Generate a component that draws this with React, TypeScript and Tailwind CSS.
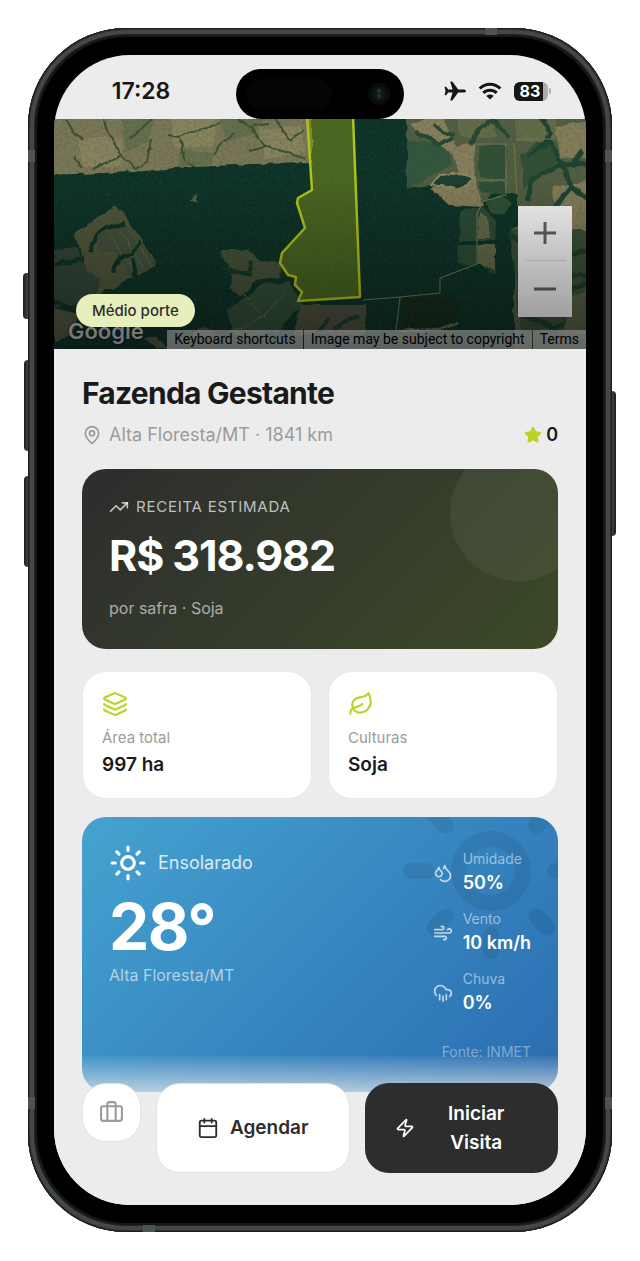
import {
  Briefcase,
  Calendar,
  CloudRain,
  Droplets,
  Layers,
  Leaf,
  MapPin,
  Star,
  Sun,
  TrendingUp,
  Wind,
  Zap,
} from "lucide-react";

const stats = [
  { label: "Área total", value: "997 ha", icon: Layers },
  { label: "Culturas", value: "Soja", icon: Leaf },
];

const weather = [
  { label: "Umidade", value: "50%", icon: Droplets },
  { label: "Vento", value: "10 km/h", icon: Wind },
  { label: "Chuva", value: "0%", icon: CloudRain },
];

const StatusBar = () => (
  <div className="grid h-16 grid-cols-[1fr_168px_1fr] items-center">
    <div className="pt-2 pr-2 text-center text-[23px] leading-7 font-semibold text-[#161616]">17:28</div>
    <div className="mt-[14px] flex h-[50px] items-center justify-between rounded-full bg-black pr-[14px] pl-[10px]">
      <div className="h-[30px] w-[86px] rounded-full bg-[#050505]" />
      <svg viewBox="0 0 22 22" className="size-[22px]">
        <circle cx="11" cy="11" r="11" fill="#0c0c0d" />
        <circle cx="11" cy="11" r="7" fill="#121516" />
        <circle cx="11" cy="8" r="2" fill="#2b3033" />
        <circle cx="11" cy="13" r="2.4" fill="#0e3a2c" />
      </svg>
    </div>
    <div className="flex items-center justify-center gap-3 pt-2 pl-1 text-[#161616]">
      <svg viewBox="0 0 22 20" className="h-5 w-[22px]" fill="currentColor">
        <path d="M22 10c0-1-1.300-1.600-2.800-1.600h-5L8.700.9C8.500.6 8.200.4 7.800.4h-1c-.4 0-.6.3-.5.7l2.300 7.300H4.200L2.300 6c-.2-.2-.4-.3-.7-.3H1c-.3 0-.5.2-.4.5L1.500 10l-.9 3.800c-.1.300.1.500.4.500h.6c.3 0 .5-.1.700-.3l1.900-2.400h4.400l-2.300 7.300c-.1.400.1.700.5.700h1c.4 0 .7-.2.900-.5l5.500-7.500h5C20.700 11.600 22 11 22 10Z" />
      </svg>
      <svg viewBox="0 0 24 18" className="h-[18px] w-6" fill="none" stroke="currentColor" strokeWidth="3">
        <path d="M1.700 6.500C7.500.7 16.500.7 22.300 6.500" />
        <path d="M5.300 10.900c3.700-3.700 9.700-3.700 13.400 0" />
        <path d="M12 17.600 8.300 14c2-2 5.400-2 7.400 0Z" fill="currentColor" stroke="none" />
      </svg>
      <div className="flex items-center gap-px">
        <div className="flex h-[19px] w-[34px] items-center overflow-hidden rounded-md bg-[#acacae]">
          <span className="h-full w-[29px] bg-[#161616] pl-[6px] text-[16px] leading-[19px] font-bold text-white">83</span>
        </div>
        <span className="h-[6px] w-[2px] rounded-r-full bg-[#acacae]" />
      </div>
    </div>
  </div>
);

const SatelliteMap = () => (
  <svg viewBox="0 0 532 230" preserveAspectRatio="xMidYMid slice" className="absolute inset-0 size-full">
    <defs>
      <filter id="grain" x="0" y="0" width="100%" height="100%">
        <feTurbulence type="fractalNoise" baseFrequency="0.35" numOctaves="3" seed="4" />
        <feColorMatrix values="0 0 0 0 0.05  0 0 0 0 0.08  0 0 0 0 0.06  1.600 0 0 0 -0.65" />
      </filter>
      <filter id="rough" x="-5%" y="-5%" width="110%" height="110%">
        <feTurbulence type="fractalNoise" baseFrequency="0.07" numOctaves="3" seed="9" />
        <feDisplacementMap in="SourceGraphic" scale="6" xChannelSelector="R" yChannelSelector="G" />
      </filter>
    </defs>
    <rect width="532" height="230" fill="#0d3529" />
    <g filter="url(#rough)">
      {/* cleared land, north west */}
      <path d="M-8-8H258V44L200 45 120 49 80 53-8 56Z" fill="#807d5a" />
      <path d="M24 18h44v30H28ZM118-4h42v32h-40ZM205 12l40-6 8 28-42 6Z" fill="#908a64" />
      <path d="M66-4h36l-8 26-22 12ZM168-4h46l-14 18-30 10ZM128 30l34 4-6 12-32 2Z" fill="#6b7451" />
      <g fill="none" stroke="#3e5535" strokeWidth="2">
        <path d="M50 0c2 12 4 16 10 22l8 14-28 14M68 36l14 14 12-8 4-22M76 20l22-20M12 0l8 14 10 6M22 36l6 14" />
        <path d="M168 0c-10 14-30 8-42 18l-12-2M126 20l6 22 8 6M184 0l12 8 18-2M180 14l-14 12-6 10M196 8l14 18 42 14M196 32l20-6M220 0l16 22 14-12" />
      </g>
      {/* fields, west */}
      <path d="M21 113 36 103 61 87 71 96 103 144 73 161 59 171 39 176 30 144Z" fill="#575b3e" />
      <path d="M70 102 86 122 103 146 78 160 62 132 44 134 42 112Z" fill="#4a5740" />
      <path d="M74 110l22 34M66 112l24 38M56 116l24 38M84 122l14 26" stroke="#656a4c" strokeWidth="1" />
      <path d="M0 130l22-2 10 22 14 10-6 24-40 6Z" fill="#34493a" />
      <path d="M0 190l26 6-10 20-16 6ZM90 218l12 0 14 12h-12Z" fill="#565d42" />
      <g fill="none" stroke="#0f3528" strokeWidth="4">
        <path d="M38 134c0-16 6-22 18-26l16-4M60 154c2-12 8-18 18-18l8-14M78 140l4 24M-4 182l28 10 14-6M0 146l30-6M48 172h22" />
      </g>
      <path d="M136 82l6-9 2 10ZM148 78l6-3" fill="#52664a" />
      {/* fields, south */}
      <path d="M165 131 195 131 206 141 228 145 226 158 202 162 186 178 176 170 178 156Z" fill="#4c583c" />
      <path d="M211 165 236 162 242 174 248 188 232 202 224 216 180 216 174 190Z" fill="#34523b" />
      <path d="M188 172l20 26 22-22M208 198l-30 14" stroke="#62704c" strokeWidth="1" fill="none" />
      <path d="M196 142l-2 14M170 150l28 6" stroke="#123a2b" strokeWidth="4" />
      <path d="M246 186H311V216H240ZM138 214l14-6 16 10H138Z" fill="#53573f" />
      <path d="M280 210l24-14M262 216l14-18" stroke="#1b4130" strokeWidth="4" />
      {/* farmland, north east */}
      <path d="M353-8H540V240H460V108H464V76L440 72 426 88 393 84 376 66 353 69Z" fill="#566345" />
      <path d="M353 20 396 28 398 46 353 70Z" fill="#365a3f" />
      <path d="M388-6 402 28 420 24 422 64 430 88 394 86 376 70 406 60 400 36 356 6Z" fill="#8f8560" />
      <path d="M424 26h28v36l-26-4ZM466 36l30-22 10 26-36 30ZM426 64h26l-2 12-24-4Z" fill="#305239" />
      <path d="M500 8l34-6v36l-26 2ZM498 68l36-6v50l-26 8Z" fill="#8b845c" />
      <path d="M462-4h40v26h-40ZM404-4h38v22h-38Z" fill="#68714b" />
      <path d="M362 12l22 14 14-8M380 8l20 8M416 24l10-14 14-10 14 18" fill="none" stroke="#284b35" strokeWidth="4" />
      <path d="M378 66l8-10 22-2 12 6-14 10-18-4Z" fill="#1d4231" stroke="#9a9168" strokeWidth="2" />
      <path d="M486-4l10 18-6 12-16 10M494 18l14 28 26-2M508 46l10 22 16 12M474 82l4-22 24-12 6-4M530 32l-12 14M500 90l18-22" fill="none" stroke="#1f4733" strokeWidth="5" />
      <path d="M456 110H532V232H468Z" fill="#3d5339" />
      <path d="M456 116l20 10 18 14 40-8M462 156h70M470 196l30 14 36-16M516 170l20-6" fill="none" stroke="#1b3f2d" strokeWidth="5" />
      <path d="M518 178l14-4v40l-24 6Z" fill="#5d6748" />
      {/* small lots */}
      <path d="M406 92l22-4 14 14-2 54-16-12-20 2Z" fill="#2d4f38" />
      <path d="M423 126h18v26l-18-8ZM424 94l10 4 2 22h-12Z" fill="#6a714e" />
      <path d="M432 82l14-6 12 8-8 12-14-2Z" fill="#335439" />
      <path d="M404 124h40" stroke="#0f3528" strokeWidth="4" />
      <path d="M348 180 400 177 408 192 402 208 370 214 348 214Z" fill="#122e1f" />
      <path d="M346 212l40-2 18-6" stroke="#62704f" strokeWidth="3" fill="none" />
    </g>
    <g fill="none" stroke="#7d805a" strokeWidth="1">
      <path d="M420 25h32v51l-22 6-7 12v51l-37 14v15l-40 4-37 3M346 178l-4 34M460 24l3 52M462 20h36M416 61h36" />
    </g>
    <rect width="532" height="230" filter="url(#grain)" opacity="0.4" />
    <path
      d="M253-3 258 71 244 79 243 84 251 109 228 134 226 144 234 156 242 158 241 166 248 173 244 182 306 178 299-3Z"
      fill="#94a51c"
      fillOpacity="0.47"
      stroke="#b9cc1c"
      strokeWidth="2.500"
      strokeLinejoin="round"
    />
  </svg>
);

const MapHeader = () => (
  <div className="relative h-[230px] overflow-hidden">
    <SatelliteMap />
    <span className="absolute bottom-0 left-[14px] text-[22px] leading-[36px] font-semibold text-[#c9cbc9] [text-shadow:0_0_2px_#000]">
      Google
    </span>
    <div className="absolute top-[87px] right-[14px] flex w-[54px] flex-col items-center bg-white">
      <button type="button" aria-label="Zoom in" className="flex h-[54px] w-full items-center justify-center">
        <svg viewBox="0 0 24 24" className="size-6 fill-[#666]">
          <path d="M10.500 1h3v9.500H23v3h-9.500V23h-3v-9.500H1v-3h9.500Z" />
        </svg>
      </button>
      <span className="h-px w-[41px] bg-[#ddd]" />
      <button type="button" aria-label="Zoom out" className="flex h-[56px] w-full items-center justify-center">
        <svg viewBox="0 0 24 24" className="size-6 fill-[#666]">
          <path d="M1 10.500h22v3H1Z" />
        </svg>
      </button>
    </div>
    <div className="absolute right-0 bottom-0 flex gap-px font-[Roboto,sans-serif] text-[14px] leading-[19px] text-black">
      <button type="button" className="bg-[#f5f5f5]/65 px-[7px]">Keyboard shortcuts</button>
      <span className="bg-[#f5f5f5]/65 px-[7px]">Image may be subject to copyright</span>
      <a href="#terms" className="bg-[#f5f5f5]/65 px-[7px]">Terms</a>
    </div>
    <div className="pointer-events-none absolute inset-0 bg-linear-to-b from-black/5 from-25% to-black/45" />
    <span className="absolute bottom-[22px] left-[22px] rounded-full bg-[#e7efbd] px-4 text-[15px] leading-[33px] font-medium text-[#2d2d2d]">
      Médio porte
    </span>
  </div>
);

const RevenueCard = () => (
  <section className="relative mt-[22px] overflow-hidden rounded-3xl bg-linear-135 from-[#2d2d2d] to-[#3c4a27] px-[27px] pt-7 pb-[29px]">
    <div className="absolute -top-6 -right-7 size-[136px] rounded-full bg-white/5" />
    <h2 className="flex items-center gap-[7px] text-[15px] leading-5 tracking-wider text-white/70 uppercase">
      <TrendingUp className="size-5" strokeWidth={2} />
      Receita estimada
    </h2>
    <p className="mt-2 text-[43px] leading-[60px] font-bold tracking-tight text-white">R$ 318.982</p>
    <p className="mt-[11px] text-[16px] leading-6 text-white/60">por safra · Soja</p>
  </section>
);

const WeatherCard = () => (
  <section className="relative mt-[18px] flex items-start justify-between overflow-hidden rounded-3xl bg-linear-135 from-[#45a3d0] to-[#2b6cb0] px-[27px] pt-[26px] pb-[30px]">
    <Sun className="absolute -top-[42px] -right-[29px] size-[192px] text-black/7" strokeWidth={2} />
    <div>
      <div className="flex h-10 items-center gap-[11px] text-[18px] leading-6 text-white/80">
        <Sun className="size-[38px] text-white" strokeWidth={2} />
        Ensolarado
      </div>
      <p className="mt-[14px] text-[64px] leading-[60px] font-bold tracking-tight text-white">28°</p>
      <p className="mt-[6px] text-[16px] leading-6 text-white/60">Alta Floresta/MT</p>
    </div>
    <div className="relative flex flex-col items-end pt-[6px]">
      <dl className="flex flex-col gap-3">
        {weather.map((item) => (
          <div key={item.label} className="flex items-center gap-[10px]">
            <item.icon className="size-5 text-white/70" strokeWidth={2} />
            <div>
              <dt className="text-[14px] leading-5 text-white/50">{item.label}</dt>
              <dd className="text-[18px] leading-7 font-semibold text-white">{item.value}</dd>
            </div>
          </div>
        ))}
      </dl>
      <p className="mt-[25px] text-[14px] leading-5 text-white/40">Fonte: INMET</p>
    </div>
  </section>
);

const ActionBar = () => (
  <div className="relative z-10 -mt-9 grid grid-cols-[59px_1fr_1fr] items-start gap-[15px] bg-linear-to-b from-[#ececec]/5 to-[#ececec] to-35% px-7 pt-[27px] pb-8">
    <button
      type="button"
      aria-label="Maleta"
      className="flex h-[59px] items-center justify-center rounded-3xl border border-[#e2e2e2] bg-white text-[#9b9b9b]"
    >
      <Briefcase className="size-[25px]" strokeWidth={2} />
    </button>
    <button
      type="button"
      className="flex items-center justify-center gap-[11px] self-stretch rounded-3xl border border-[#e2e2e2] bg-white text-[19px] leading-7 font-semibold text-[#2d2d2d]"
    >
      <Calendar className="size-[22px]" strokeWidth={2} />
      Agendar
    </button>
    <button
      type="button"
      className="flex items-center justify-center gap-[10px] rounded-3xl bg-[#2d2d2d] px-[30px] py-4 text-[19px] leading-[29px] font-semibold text-white"
    >
      <Zap className="size-5 shrink-0" strokeWidth={2} />
      <span className="flex-1">Iniciar Visita</span>
    </button>
  </div>
);

const Screen = () => (
  <main className="overflow-hidden rounded-[76px] bg-[#ececec] font-[Inter,sans-serif]">
    <StatusBar />
    <MapHeader />
    <div className="px-7 pt-6">
      <h1 className="text-[30px] leading-10 font-bold tracking-tight text-[#1a1a1a]">Fazenda Gestante</h1>
      <div className="mt-[9px] flex items-center justify-between text-[18px] leading-[25px]">
        <p className="flex items-center gap-[7px] text-[#9b9b9b]">
          <MapPin className="size-5" strokeWidth={2} />
          Alta Floresta/MT · 1841 km
        </p>
        <p className="flex items-center gap-1 font-semibold text-[#1a1a1a]">
          <Star className="size-[18px] fill-[#bdd226] text-[#bdd226]" />0
        </p>
      </div>
      <RevenueCard />
      <div className="mt-[22px] grid grid-cols-2 gap-4">
        {stats.map((stat) => (
          <div key={stat.label} className="rounded-3xl border border-[#e8e8e8] bg-white px-[19px] py-[19px]">
            <stat.icon className="size-[26px] text-[#bdd226]" strokeWidth={2} />
            <p className="mt-[11px] text-[15px] leading-5 text-[#9b9b9b]">{stat.label}</p>
            <p className="mt-[3px] text-[19px] leading-7 font-semibold text-[#1a1a1a]">{stat.value}</p>
          </div>
        ))}
      </div>
      <WeatherCard />
    </div>
    <ActionBar />
  </main>
);

const App = () => (
  <div className="min-h-screen bg-white px-7 py-7">
    <div className="relative mx-auto max-w-[584px]">
      {/* side buttons */}
      <span className="absolute top-[245px] -left-[5px] h-[46px] w-[6px] rounded-l-sm bg-linear-to-r from-[#1b1d1d] to-[#4a504e]" />
      <span className="absolute top-[332px] -left-1 h-[91px] w-[5px] rounded-l-sm bg-linear-to-r from-[#1b1d1d] to-[#4a504e]" />
      <span className="absolute top-[448px] -left-1 h-[91px] w-[5px] rounded-l-sm bg-linear-to-r from-[#1b1d1d] to-[#4a504e]" />
      <span className="absolute top-[363px] -right-1 h-[145px] w-[5px] rounded-r-sm bg-linear-to-r from-[#4a504e] to-[#1b1d1d]" />
      <div className="relative rounded-[98px] bg-[#161818] p-[9px] shadow-[inset_0_0_0_1px_#1d1f1f,inset_0_0_0_2px_#2e3131,inset_0_0_0_6px_#434747,inset_0_0_0_7px_#222424]">
        {/* antenna bands */}
        <span className="absolute top-[122px] left-0 h-3 w-[7px] bg-[#4d5252]" />
        <span className="absolute top-[122px] right-0 h-3 w-[7px] bg-[#4d5252]" />
        <span className="absolute bottom-[123px] left-0 h-3 w-[7px] bg-[#4d5252]" />
        <span className="absolute right-0 bottom-[123px] h-3 w-[7px] bg-[#4d5252]" />
        <span className="absolute top-0 right-[115px] h-[7px] w-3 bg-[#4d5252]" />
        <span className="absolute bottom-0 left-[115px] h-[7px] w-3 bg-[#4d5252]" />
        <div className="rounded-[90px] bg-black px-[17px] py-[18px]">
          <Screen />
        </div>
      </div>
    </div>
  </div>
);

export default App;
